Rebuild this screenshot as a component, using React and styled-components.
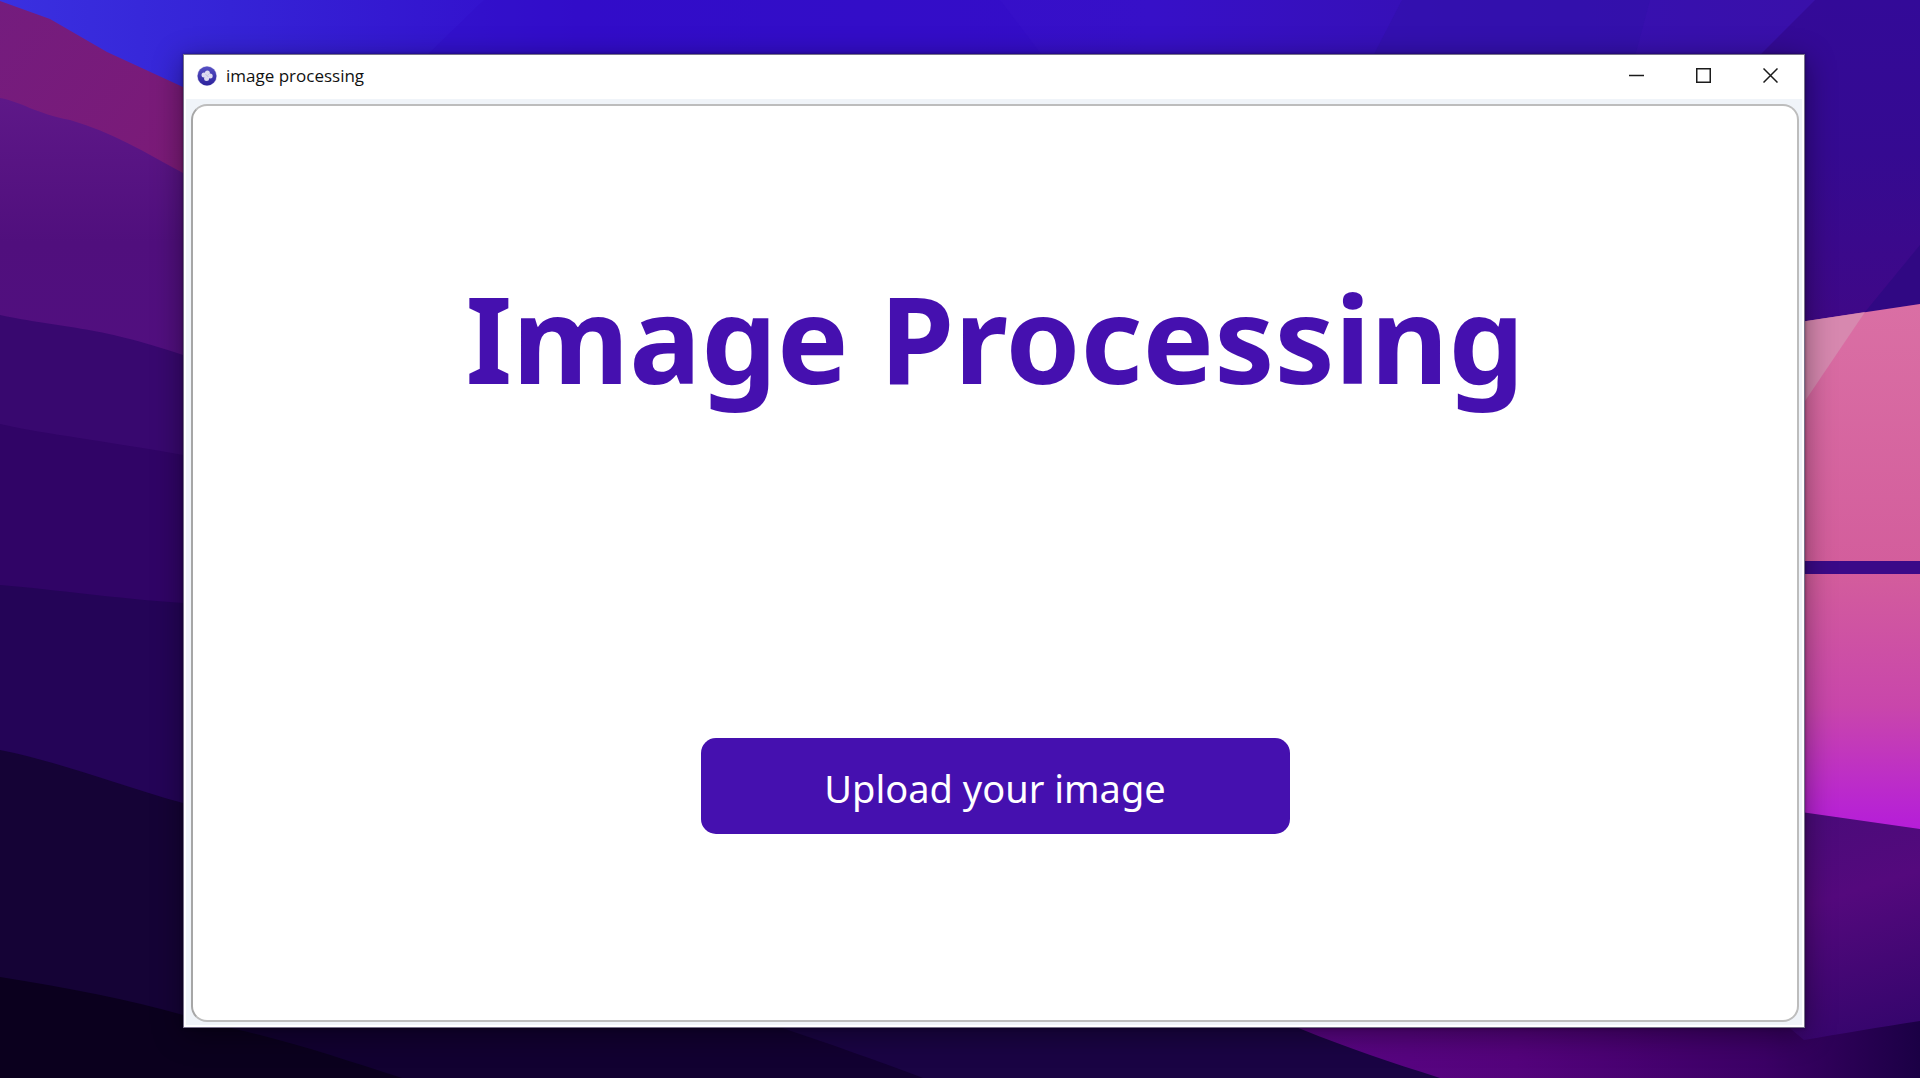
import React, { useRef } from "react";
import styled, { createGlobalStyle } from "styled-components";

const GlobalStyle = createGlobalStyle`
  *, *::before, *::after { box-sizing: border-box; }
  body { margin: 0; background: #12022f; }
`;

const INDIGO = "#4510af";

const Desktop = styled.main`
  display: grid;
  grid-template: minmax(100vh, auto) / minmax(0, 1fr);
  font-family: "Noto Sans", "Open Sans", sans-serif;
`;

const Backdrop = styled.svg`
  grid-area: 1 / 1;
  display: block;
  width: 100%;
  height: 100%;
  min-height: 0;
  contain: size;
`;

const Stage = styled.div`
  grid-area: 1 / 1;
  z-index: 1;
  display: flex;
  padding: 54px 115px 50px 183px;
`;

const AppWindow = styled.section`
  flex: 1;
  display: flex;
  flex-direction: column;
  min-width: 0;
  background: #fff;
  border: 1px solid #77718a;
  box-shadow: 0 0 3px rgba(0, 0, 0, 0.45), 0 6px 28px rgba(0, 0, 0, 0.42);
`;

const TitleBar = styled.header`
  display: flex;
  align-items: stretch;
  height: 44px;
  padding: 0 0 3px 13px;
`;

const TitleLabel = styled.div`
  flex: 1;
  display: flex;
  align-items: center;
  gap: 9px;
  color: #111;
  font: 400 17px/24px "Open Sans", "Noto Sans", sans-serif;
`;

const AppIcon = styled.svg`
  width: 20px;
  height: 20px;
`;

const CaptionButton = styled.button`
  display: grid;
  place-items: center;
  width: 67px;
  padding: 0;
  border: 0;
  background: transparent;
  color: #1b1b1b;

  &:hover {
    background: ${(p) => (p.$danger ? "#e81123" : "#e5e5e5")};
    color: ${(p) => (p.$danger ? "#fff" : "#1b1b1b")};
  }
`;

const Glyph = styled.svg`
  width: 15px;
  height: 15px;
  fill: none;
  stroke: currentColor;
  stroke-width: 1.5;
`;

const Frame = styled.div`
  flex: 1;
  display: flex;
  margin: 0 2px 2px;
  padding: 5px 3px 3px 5px;
  background: #f0f4f9;
`;

const Panel = styled.div`
  flex: 1;
  display: flex;
  flex-direction: column;
  align-items: center;
  padding: 150px 24px 186px;
  background: #fff;
  border: 2px solid #bdbdbd;
  border-left-color: #a6a6a6;
  border-radius: 16px;
`;

const Heading = styled.h1`
  margin: 0;
  color: ${INDIGO};
  font-size: 120px;
  font-weight: 700;
  line-height: 164px;
  text-align: center;
`;

const UploadButton = styled.button`
  width: 589px;
  max-width: 100%;
  min-height: 96px;
  margin-top: auto;
  padding: 4px 24px 0;
  border: 0;
  border-radius: 15px;
  background: ${INDIGO};
  color: #fff;
  font: 400 38px/52px "Noto Sans", "Open Sans", sans-serif;
  cursor: pointer;
`;

const FileInput = styled.input`
  display: none;
`;

function Wallpaper() {
  return (
    <Backdrop viewBox="0 0 1920 1078" preserveAspectRatio="none" aria-hidden="true">
      <defs>
        <linearGradient id="sky" x1="0" x2="1" y1="0" y2="0">
          <stop offset="0" stopColor="#3a30e0" />
          <stop offset="0.12" stopColor="#3523d6" />
          <stop offset="0.3" stopColor="#330dcb" />
          <stop offset="0.6" stopColor="#3710c8" />
          <stop offset="0.76" stopColor="#3610b4" />
          <stop offset="1" stopColor="#3a10a6" />
        </linearGradient>
        <linearGradient id="skyShade" x1="0" x2="0" y1="0" y2="1">
          <stop offset="0" stopColor="#330a98" />
          <stop offset="0.45" stopColor="#350a91" />
          <stop offset="1" stopColor="#400886" />
        </linearGradient>
        <linearGradient id="magenta" x1="0" x2="1" y1="0" y2="1">
          <stop offset="0" stopColor="#741c7e" />
          <stop offset="1" stopColor="#7f1a74" />
        </linearGradient>
        <linearGradient id="violet" x1="0" x2="0" y1="0" y2="1">
          <stop offset="0" stopColor="#5e1888" />
          <stop offset="0.45" stopColor="#500f7d" />
          <stop offset="1" stopColor="#520f80" />
        </linearGradient>
        <linearGradient id="pink" x1="0" x2="0" y1="0" y2="1">
          <stop offset="0" stopColor="#da6fa4" />
          <stop offset="0.5" stopColor="#d35d9c" />
          <stop offset="0.75" stopColor="#c946ab" />
          <stop offset="0.93" stopColor="#b926d0" />
          <stop offset="1" stopColor="#b419dc" />
        </linearGradient>
        <linearGradient id="plum" gradientUnits="userSpaceOnUse" x1="1810" y1="820" x2="1880" y2="1040">
          <stop offset="0" stopColor="#4b0b7a" />
          <stop offset="0.35" stopColor="#54097d" />
          <stop offset="1" stopColor="#34056c" />
        </linearGradient>
        <linearGradient id="plumFloor" gradientUnits="userSpaceOnUse" x1="1300" y1="0" x2="1920" y2="0">
          <stop offset="0" stopColor="#5a0584" />
          <stop offset="0.35" stopColor="#54037c" />
          <stop offset="0.75" stopColor="#3b0065" />
          <stop offset="1" stopColor="#1b0045" />
        </linearGradient>
      </defs>

      <rect width="1920" height="1078" fill="url(#sky)" />
      <path d="M484 0 L428 54 L1041 54 L1000 0Z" fill="#320bc6" opacity="0.35" />
      <path d="M1402 0 L1371 60 H1634 L1650 0Z" fill="#3010a8" opacity="0.5" />
      <path d="M1815 0 L1755 60 V340 H1920 V0Z" fill="url(#skyShade)" />
      <path d="M1920 245 L1865 312 L1920 304Z" fill="#300883" />

      <path d="M0 1 L50 19 L107 52 L183 87 L240 112 V300 H0Z" fill="url(#magenta)" />
      <path d="M0 98 C22 102 34 113 70 120 C112 132 146 153 183 173 V420 H0Z" fill="url(#violet)" />
      <path d="M0 315 C60 328 95 325 183 355 V500 H0Z" fill="#38086f" />
      <path d="M0 424 C50 435 100 440 183 455 V640 H0Z" fill="#300466" />
      <path d="M0 585 C60 590 110 598 183 603 V840 H0Z" fill="#240457" />
      <path d="M0 750 C65 763 120 786 183 803 H240 V1078 H0Z" fill="#150336" />

      <rect x="183" y="1000" width="1200" height="78" fill="#120131" />
      <path d="M0 977 C70 988 130 1000 183 1015 L235 1029 C300 1044 345 1060 402 1078 H0Z" fill="#0b001e" />
      <path d="M700 1000 L785 1029 C830 1044 875 1060 923 1078 H1460 V1000Z" fill="#1a0444" />

      <path d="M1780 325 L1920 304 V840 H1780Z" fill="url(#pink)" />
      <path d="M1780 325 L1865 312 L1805 401 L1780 430Z" fill="#d68db2" opacity="0.85" />
      <rect x="1780" y="561" width="140" height="13" fill="#3b0a88" />
      <path d="M1780 809 L1920 829 V1078 H1780Z" fill="url(#plum)" />
      <path d="M1240 1006 L1301 1029 C1350 1049 1390 1062 1440 1078 H1920 V1021 C1880 1027 1840 1034 1804 1040 L1780 1020Z" fill="url(#plumFloor)" />
    </Backdrop>
  );
}

function AppLogo() {
  return (
    <AppIcon viewBox="0 0 20 20" aria-hidden="true">
      <defs>
        <linearGradient id="badge" x1="0" x2="0" y1="0" y2="1">
          <stop offset="0" stopColor="#5650c4" />
          <stop offset="1" stopColor="#2c229c" />
        </linearGradient>
      </defs>
      <circle cx="10" cy="10" r="10" fill="#c9c5e6" />
      <circle cx="10" cy="10" r="9.4" fill="url(#badge)" />
      <g fill="#dcdaf0">
        <circle cx="10.4" cy="6.9" r="2.5" />
        <circle cx="7" cy="9" r="2.5" />
        <circle cx="13.2" cy="10" r="2.5" />
        <circle cx="9.6" cy="12.6" r="2.5" />
        <circle cx="10" cy="9.8" r="2.6" />
      </g>
      <path d="M8.6 8.2l2.8 2.8M11.6 8.4l-1 1" stroke="#b5b2da" strokeWidth="0.8" />
    </AppIcon>
  );
}

export default function App() {
  const fileRef = useRef(null);

  return (
    <>
      <GlobalStyle />
      <Desktop>
        <Wallpaper />
        <Stage>
          <AppWindow>
            <TitleBar>
              <TitleLabel>
                <AppLogo />
                <span>image processing</span>
              </TitleLabel>
              <CaptionButton type="button" aria-label="Minimize">
                <Glyph viewBox="0 0 15 15">
                  <path d="M0 7.5H15" />
                </Glyph>
              </CaptionButton>
              <CaptionButton type="button" aria-label="Maximize">
                <Glyph viewBox="0 0 15 15">
                  <rect x="0.75" y="0.75" width="13.5" height="13.5" />
                </Glyph>
              </CaptionButton>
              <CaptionButton type="button" aria-label="Close" $danger>
                <Glyph viewBox="0 0 15 15">
                  <path d="M0.5 0.5L14.5 14.5M14.5 0.5L0.5 14.5" />
                </Glyph>
              </CaptionButton>
            </TitleBar>
            <Frame>
              <Panel>
                <Heading>Image Processing</Heading>
                <UploadButton type="button" onClick={() => fileRef.current?.click()}>
                  Upload your image
                </UploadButton>
                <FileInput ref={fileRef} type="file" accept="image/*" aria-label="Image file" />
              </Panel>
            </Frame>
          </AppWindow>
        </Stage>
      </Desktop>
    </>
  );
}
